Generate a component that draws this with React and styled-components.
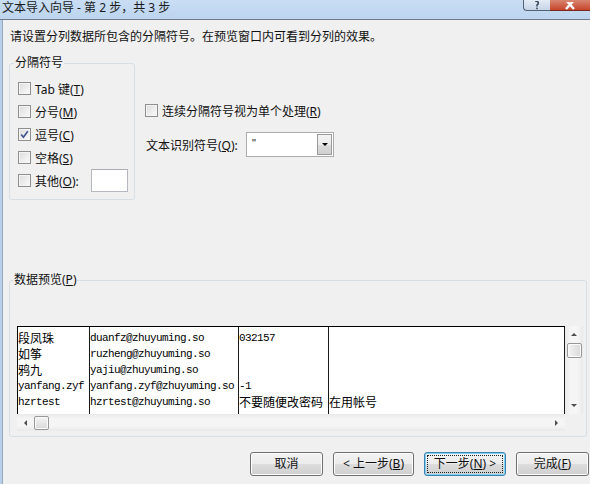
import React from 'react'
import styled, { createGlobalStyle, css } from 'styled-components'

const GlobalStyle = createGlobalStyle`
  html, body {
    margin: 0;
    padding: 0;
    background: #f0f0f0;
  }
  body {
    font-family: "Noto Sans", "Noto Sans CJK SC", sans-serif;
    font-size: 12px;
    color: #111;
  }
`

const UI_FONT = `"Noto Sans", "Noto Sans CJK SC", sans-serif`

const Window = styled.div`
  width: 590px;
  height: 484px;
  overflow: hidden;
  display: flex;
  flex-direction: column;
  background: #f0f0f0;
`

const TitleBar = styled.div`
  height: 19px;
  flex: none;
  display: flex;
  align-items: flex-start;
  background: linear-gradient(#c9def4, #bcd4ee);
  border-bottom: 1px solid #6f7b88;
`

const Title = styled.div`
  flex: 1;
  padding-left: 2px;
  line-height: 15px;
  color: #1a1a1a;
`

const CaptionButton = styled.div`
  height: 10px;
  display: flex;
  align-items: flex-end;
  justify-content: center;
  overflow: hidden;
  ${({ $close }) =>
    $close
      ? css`
          width: 40px;
          background: linear-gradient(#d8866f, #c6452c);
          border-bottom: 1px solid #7a2a1a;
        `
      : css`
          width: 26px;
          background: linear-gradient(#e4ecf5, #c5d5e7);
          border: 1px solid #526376;
          border-top: none;
          border-right: none;
          border-bottom-left-radius: 4px;
        `}
`

const HelpIcon = () => (
  <svg width="8" height="9" viewBox="0 0 8 9">
    <path d="M2 0 C6 0 6 3 4 4 L4 5.5" fill="none" stroke="#3a4a5c" strokeWidth="1.6" />
    <rect x="3.2" y="6.6" width="1.6" height="1.6" fill="#3a4a5c" />
  </svg>
)

const CloseIcon = () => (
  <svg width="12" height="8" viewBox="0 0 12 8">
    <path d="M1 -3 L10 7 M11 -3 L2 7" stroke="#fff" strokeWidth="2.4" />
  </svg>
)

const Frame = styled.div`
  flex: 1;
  display: flex;
  border-left: 2px solid #b7cfea;
`

const Content = styled.div`
  flex: 1;
  display: flex;
  flex-direction: column;
  border-left: 1px solid #97a9bd;
  padding: 9px 0 0 6px;
`

const Instruction = styled.div`
  line-height: 16px;
  margin-left: 1px;
`

const TopSection = styled.div`
  display: flex;
  align-items: flex-start;
  margin-top: 10px;
`

const Group = styled.fieldset`
  margin: 0;
  box-sizing: border-box;
  width: ${({ $width }) => $width}px;
  border: 1px solid #d5dfe5;
  border-radius: 3px;
  padding: ${({ $padding }) => $padding};
  min-width: 0;
`

const Legend = styled.legend`
  padding: 0 1px;
  margin-left: -4px;
  line-height: 16px;
  font-size: 12px;
`

const CheckRow = styled.label`
  display: flex;
  align-items: center;
  height: 23px;
  gap: 4px;
  white-space: nowrap;
`

const Box = styled.span`
  box-sizing: border-box;
  width: 13px;
  height: 13px;
  flex: none;
  border: 1px solid #8f8f8f;
  background: linear-gradient(135deg, #dcdcdc, #fbfbfb);
  box-shadow: inset 0 0 0 1px #f4f4f4;
  display: flex;
  align-items: center;
  justify-content: center;
`

const OtherInput = styled.div`
  box-sizing: border-box;
  width: 37px;
  height: 23px;
  margin-left: auto;
  background: #fff;
  border: 1px solid #b5b8bf;
  border-top-color: #abadb3;
`

const RightColumn = styled.div`
  display: flex;
  flex-direction: column;
  margin-left: 10px;
  margin-top: 44px;
`

const QuoteRow = styled.div`
  display: flex;
  align-items: center;
  margin-top: 10px;
  padding-left: 1px;
`

const QuoteLabel = styled.span`
  width: 100px;
  white-space: nowrap;
`

const Select = styled.div`
  box-sizing: border-box;
  width: 88px;
  height: 25px;
  display: flex;
  background: #fff;
  border: 1px solid #acacac;
`

const SelectValue = styled.div`
  flex: 1;
  padding-left: 5px;
  line-height: 20px;
  font-family: "Liberation Sans", sans-serif;
  font-size: 11px;
`

const DropButton = styled.div`
  box-sizing: border-box;
  width: 15px;
  display: flex;
  align-items: center;
  justify-content: center;
  border: 1px solid #9a9a9a;
  margin: 1px;
  background: linear-gradient(#f3f3f3, #ebebeb 50%, #dcdcdc 50%, #cfcfcf);
`

const Arrow = styled.span`
  width: 0;
  height: 0;
  ${({ $dir, $size = 3.5, $color = '#4d4d4d' }) => {
    if ($dir === 'up')
      return css`
        border-left: ${$size}px solid transparent;
        border-right: ${$size}px solid transparent;
        border-bottom: ${$size}px solid ${$color};
      `
    if ($dir === 'down')
      return css`
        border-left: ${$size}px solid transparent;
        border-right: ${$size}px solid transparent;
        border-top: ${$size}px solid ${$color};
      `
    if ($dir === 'left')
      return css`
        border-top: ${$size}px solid transparent;
        border-bottom: ${$size}px solid transparent;
        border-right: ${$size}px solid ${$color};
      `
    return css`
      border-top: ${$size}px solid transparent;
      border-bottom: ${$size}px solid transparent;
      border-left: ${$size}px solid ${$color};
    `
  }}
`

const PreviewSection = styled.div`
  margin-top: 72px;
`

const PreviewBox = styled.div`
  display: grid;
  grid-template-columns: 548px 18px;
  grid-template-rows: 88px 17px;
`

const DataGrid = styled.div`
  display: flex;
  background: #fff;
  border-top: 1px solid #000;
  border-left: 1px solid #000;
  overflow: hidden;
`

const Column = styled.div`
  box-sizing: border-box;
  width: ${({ $width }) => $width}px;
  flex: none;
  border-right: 1px solid #1a1a1a;
  padding-top: 3px;
`

const Cell = styled.div`
  height: 16px;
  line-height: 16px;
  white-space: nowrap;
  overflow: hidden;
  color: #000;
  ${({ $cjk }) =>
    $cjk
      ? css`
          font-family: "Noto Sans CJK SC", sans-serif;
          font-size: 12px;
        `
      : css`
          font-family: "Liberation Mono", monospace;
          font-size: 11px;
          letter-spacing: -0.6px;
        `}
`

const VScroll = styled.div`
  display: flex;
  flex-direction: column;
  align-items: center;
  background: linear-gradient(90deg, #e9e9e9, #f5f5f5 30%, #f5f5f5 70%, #e9e9e9);
`

const HScroll = styled.div`
  display: flex;
  align-items: center;
  background: linear-gradient(#e9e9e9, #f5f5f5 30%, #f5f5f5 70%, #e9e9e9);
`

const ScrollArrow = styled.div`
  flex: none;
  width: ${({ $w }) => $w}px;
  height: ${({ $h }) => $h}px;
  display: flex;
  align-items: center;
  justify-content: center;
  ${({ $end }) => $end && 'margin-left: auto; margin-top: auto;'}
`

const Thumb = styled.div`
  box-sizing: border-box;
  width: ${({ $w }) => $w}px;
  height: ${({ $h }) => $h}px;
  flex: none;
  border: 1px solid #979797;
  border-radius: 2px;
  background: ${({ $vertical }) =>
    $vertical
      ? 'linear-gradient(90deg, #f4f4f4, #e6e6e6 50%, #d9d9d9)'
      : 'linear-gradient(#f4f4f4, #e6e6e6 50%, #d9d9d9)'};
  box-shadow: inset 0 0 0 1px #fbfbfb;
`

const Corner = styled.div`
  background: #f0f0f0;
`

const ButtonRow = styled.div`
  display: flex;
  justify-content: flex-end;
  gap: 10px;
  margin-top: 15px;
  padding-right: 1px;
`

const Button = styled.div`
  box-sizing: border-box;
  width: ${({ $width }) => $width}px;
  height: 24px;
  display: flex;
  align-items: center;
  justify-content: center;
  white-space: nowrap;
  font-family: ${UI_FONT};
  font-size: 12px;
  line-height: 16px;
  border: 1px solid #707070;
  border-radius: 3px;
  background: linear-gradient(#f3f3f3, #ebebeb 50%, #dddddd 50%, #cfcfcf);
  box-shadow: inset 0 0 0 1px #fcfcfc;
  ${({ $default }) =>
    $default &&
    css`
      border-color: #3c7fb1;
      box-shadow: inset 0 0 0 1px #7fd3f5;
      outline: 1px dotted #222;
      outline-offset: -4px;
    `}
`

const CheckMark = () => (
  <svg width="9" height="9" viewBox="0 0 9 9">
    <path d="M1.2 4.6 L3.4 7.2 L7.8 1.2" fill="none" stroke="#3d4f8e" strokeWidth="1.6" />
  </svg>
)

const Checkbox = ({ checked, children }) => (
  <CheckRow>
    <Box>{checked && <CheckMark />}</Box>
    <span>{children}</span>
  </CheckRow>
)

const hasCjk = (s) => /[\u4e00-\u9fff]/.test(s)

const columns = [
  { width: 72, cells: ['段凤珠', '如筝', '鸦九', 'yanfang.zyf', 'hzrtest'] },
  {
    width: 149,
    cells: [
      'duanfz@zhuyuming.so',
      'ruzheng@zhuyuming.so',
      'yajiu@zhuyuming.so',
      'yanfang.zyf@zhuyuming.so',
      'hzrtest@zhuyuming.so',
    ],
  },
  { width: 90, cells: ['032157', '', '', '-1', '不要随便改密码'] },
  { width: 236, cells: ['', '', '', '', '在用帐号'] },
]

const App = () => (
  <Window>
    <GlobalStyle />
    <TitleBar>
      <Title>文本导入向导 - 第 2 步，共 3 步</Title>
      <CaptionButton>
        <HelpIcon />
      </CaptionButton>
      <CaptionButton $close>
        <CloseIcon />
      </CaptionButton>
    </TitleBar>
    <Frame>
      <Content>
        <Instruction>请设置分列数据所包含的分隔符号。在预览窗口内可看到分列的效果。</Instruction>
        <TopSection>
          <Group $width={126} $padding="6px 6px 7px 8px">
            <Legend>分隔符号</Legend>
            <Checkbox>
              Tab 键(<u>T</u>)
            </Checkbox>
            <Checkbox>
              分号(<u>M</u>)
            </Checkbox>
            <Checkbox checked>
              逗号(<u>C</u>)
            </Checkbox>
            <Checkbox>
              空格(<u>S</u>)
            </Checkbox>
            <CheckRow>
              <Box />
              <span>
                其他(<u>O</u>):
              </span>
              <OtherInput />
            </CheckRow>
          </Group>
          <RightColumn>
            <Checkbox>
              连续分隔符号视为单个处理(<u>R</u>)
            </Checkbox>
            <QuoteRow>
              <QuoteLabel>
                文本识别符号(<u>Q</u>):
              </QuoteLabel>
              <Select>
                <SelectValue>"</SelectValue>
                <DropButton>
                  <Arrow $dir="down" $size={3.5} $color="#000" />
                </DropButton>
              </Select>
            </QuoteRow>
          </RightColumn>
        </TopSection>
        <PreviewSection>
          <Group $width={578} $padding="38px 3px 5px 7px">
            <Legend>
              数据预览(<u>P</u>)
            </Legend>
            <PreviewBox>
              <DataGrid>
                {columns.map((col, i) => (
                  <Column key={i} $width={col.width}>
                    {col.cells.map((text, j) => (
                      <Cell key={j} $cjk={hasCjk(text)}>
                        {text}
                      </Cell>
                    ))}
                  </Column>
                ))}
              </DataGrid>
              <VScroll>
                <ScrollArrow $w={18} $h={17}>
                  <Arrow $dir="up" $size={3} />
                </ScrollArrow>
                <Thumb $vertical $w={15} $h={15} />
                <ScrollArrow $w={18} $h={17} $end>
                  <Arrow $dir="down" $size={3} />
                </ScrollArrow>
              </VScroll>
              <HScroll>
                <ScrollArrow $w={17} $h={17}>
                  <Arrow $dir="left" $size={3} />
                </ScrollArrow>
                <Thumb $w={15} $h={14} />
                <ScrollArrow $w={17} $h={17} $end>
                  <Arrow $dir="right" $size={3} />
                </ScrollArrow>
              </HScroll>
              <Corner />
            </PreviewBox>
          </Group>
        </PreviewSection>
        <ButtonRow>
          <Button $width={73}>取消</Button>
          <Button $width={81}>
            &lt; 上一步(<u>B</u>)
          </Button>
          <Button $width={82} $default>
            下一步(<u>N</u>) &gt;
          </Button>
          <Button $width={73}>
            完成(<u>F</u>)
          </Button>
        </ButtonRow>
      </Content>
    </Frame>
  </Window>
)

export default App
